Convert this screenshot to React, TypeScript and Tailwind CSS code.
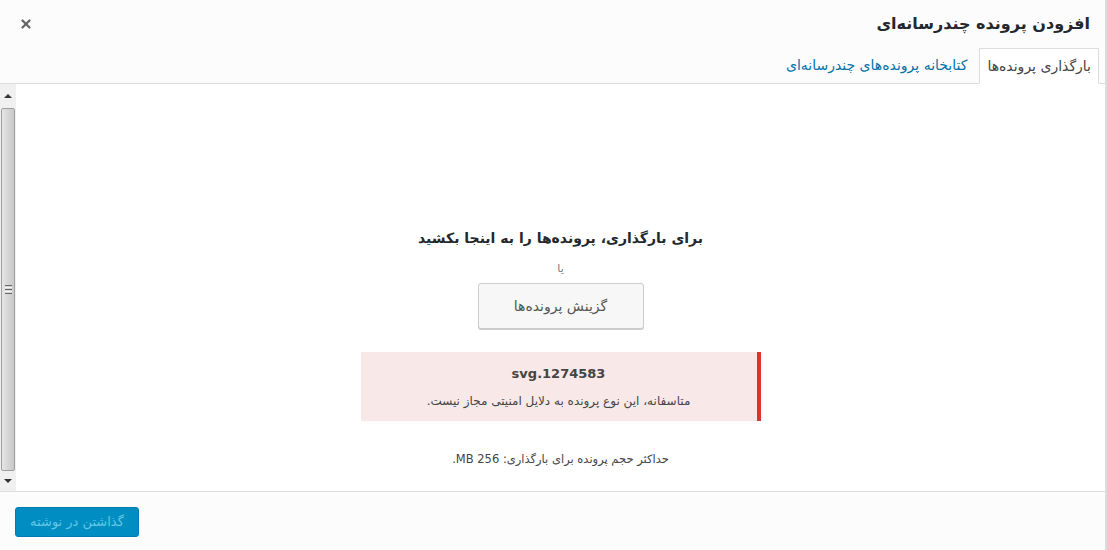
import { X } from "lucide-react";

const font = { fontFamily: '"DejaVu Sans", Tahoma, sans-serif' };

function Scrollbar() {
  return (
    <div className="flex w-[16px] flex-col bg-[#f0f0f0]">
      <div className="flex h-[24px] items-center justify-center">
        <div className="h-0 w-0 border-x-[4px] border-b-[4px] border-x-transparent border-b-[#333]" />
      </div>
      <div className="mx-[1px] flex flex-1 items-center justify-center rounded-[2px] border border-[#9e9e9e] bg-gradient-to-r from-[#e6e6e6] via-[#d6d6d6] to-[#c8c8c8]">
        <div className="flex flex-col gap-[1px]">
          <div className="h-[1px] w-[7px] bg-[#666]" />
          <div className="h-[1px] w-[7px] bg-[#f4f4f4]" />
          <div className="h-[1px] w-[7px] bg-[#666]" />
          <div className="h-[1px] w-[7px] bg-[#f4f4f4]" />
          <div className="h-[1px] w-[7px] bg-[#666]" />
        </div>
      </div>
      <div className="flex h-[20px] items-center justify-center">
        <div className="h-0 w-0 border-x-[4px] border-t-[4px] border-x-transparent border-t-[#333]" />
      </div>
    </div>
  );
}

export default function App() {
  return (
    <div
      className="flex h-[550px] w-[1107px] flex-col border-r-2 border-[#dcdcdc] bg-[#fcfcfc] text-[#444]"
      style={font}
    >
      <header className="flex h-[84px] flex-col border-b border-[#ddd]">
        <div className="flex h-[48px] items-center justify-between pl-[19px] pr-[15px]">
          <X className="h-[14px] w-[14px] text-[#666]" strokeWidth={4} />
          <h1 dir="rtl" className="text-[16px] font-bold text-[#23282d]">
            افزودن پرونده چندرسانه‌ای
          </h1>
        </div>
        <nav className="flex flex-1 items-end justify-end pr-[6px]">
          <a
            dir="rtl"
            className="flex h-[35px] items-center px-[12px] text-[14px] text-[#0073aa]"
          >
            کتابخانه پرونده‌های چندرسانه‌ای
          </a>
          <a
            dir="rtl"
            className="-mb-px flex h-[36px] items-center border border-b-white border-[#ddd] bg-white px-[7px] text-[14px] text-[#444]"
          >
            بارگذاری پرونده‌ها
          </a>
        </nav>
      </header>

      <main className="flex flex-1 bg-white">
        <Scrollbar />
        <div className="flex flex-1 flex-col items-center pt-[142px]">
          <h2 dir="rtl" className="h-[24px] text-[14px] font-bold leading-[24px] text-[#23282d]">
            برای بارگذاری، پرونده‌ها را به اینجا بکشید
          </h2>
          <p dir="rtl" className="mt-[10px] text-[11px] leading-[18px] text-[#72777c]">
            یا
          </p>
          <button
            dir="rtl"
            className="mt-[5px] h-[46px] w-[166px] rounded-[3px] border border-[#ccc] bg-[#f7f7f7] text-[14px] text-[#555] shadow-[0_1px_0_#ccc]"
          >
            گزینش پرونده‌ها
          </button>
          <div className="mt-[23px] flex h-[69px] w-[400px] flex-col items-center border-r-4 border-[#dc3232] bg-[#f9e8e8] pt-[13px]">
            <strong className="text-[13px] leading-[18px] text-[#444]">svg.1274583</strong>
            <p dir="rtl" className="mt-[9px] text-[12px] leading-[18px] text-[#444]">
              متاسفانه، این نوع پرونده به دلایل امنیتی مجاز نیست.
            </p>
          </div>
          <p dir="rtl" className="mt-[29px] text-[11.5px] leading-[18px] text-[#444]">
            حداکثر حجم پرونده برای بارگذاری: 256 MB.
          </p>
        </div>
      </main>

      <footer className="flex h-[59px] items-start border-t border-[#ddd] px-[15px] pt-[15px]">
        <button
          dir="rtl"
          className="h-[30px] w-[124px] rounded-[3px] border border-[#007cb2] bg-[#008ec2] text-[13px] text-[#66c6e4]"
        >
          گذاشتن در نوشته
        </button>
      </footer>
    </div>
  );
}
